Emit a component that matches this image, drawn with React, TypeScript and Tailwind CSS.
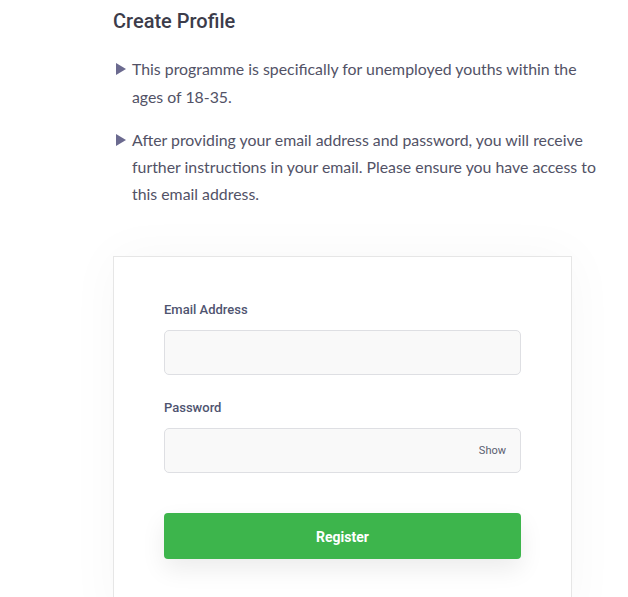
export default function App() {
  return (
    <main className="min-h-screen bg-white pl-[113px] pr-[26px] pt-[9px] font-['Lato',sans-serif] text-[#525266]">
      <h1 className="font-['Roboto',sans-serif] text-[20px] leading-[24px] font-medium text-[#3c3c4a]">
        Create Profile
      </h1>

      <ul className="mt-[22px] flex flex-col gap-[15px]">
        <li className="flex gap-[5px]">
          <svg width="12" height="12" viewBox="0 0 12 12" className="mt-[8px] ml-[2px] shrink-0">
            <path d="M1 0 L11 6 L1 12 Z" fill="#6b6a8f" />
          </svg>
          <p className="text-[15.85px] leading-[28px]">
            This programme is specifically for unemployed youths within the ages of 18-35.
          </p>
        </li>
        <li className="flex gap-[5px]">
          <svg width="12" height="12" viewBox="0 0 12 12" className="mt-[8px] ml-[2px] shrink-0">
            <path d="M1 0 L11 6 L1 12 Z" fill="#6b6a8f" />
          </svg>
          <p className="text-[15.85px] leading-[27px]">
            After providing your email address and password, you will receive further instructions in your email. Please ensure you have access to this email address.
          </p>
        </li>
      </ul>

      <div className="mt-[49px] w-[459px] border border-[#e6e6e6] bg-white shadow-[0_0_50px_rgba(0,0,0,0.035)] px-[50px] pt-[44px] pb-[60px] font-['Roboto',sans-serif]">
        <label className="block text-[13px] leading-[18px] font-medium text-[#4f5470]">Email Address</label>
        <input
          type="email"
          className="mt-[11px] block w-full h-[45px] rounded-[5px] border border-[#dedfe3] bg-[#f9f9f9] px-[14px] outline-none"
        />

        <label className="mt-[24px] block text-[13px] leading-[18px] font-medium text-[#4f5470]">Password</label>
        <div className="mt-[11px] flex items-center h-[45px] rounded-[5px] border border-[#dedfe3] bg-[#f9f9f9] pl-[14px] pr-[14px] pt-[2px]">
          <input type="password" className="flex-1 bg-transparent outline-none" />
          <span className="text-[11px] text-[#5a5e70]">Show</span>
        </div>

        <button className="mt-[40px] w-full h-[46px] rounded-[4px] bg-[#3db54c] pt-[2px] text-white text-[14px] font-bold shadow-[0_10px_24px_rgba(0,0,0,0.08)]">
          Register
        </button>
      </div>
    </main>
  );
}
